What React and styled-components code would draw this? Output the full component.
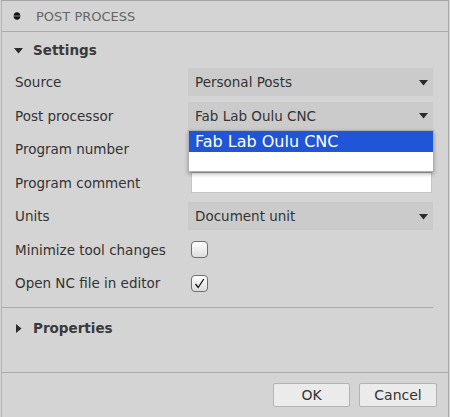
import React from 'react'
import styled, { createGlobalStyle } from 'styled-components'

const GlobalStyle = createGlobalStyle`
    html, body {
        margin: 0;
        padding: 0;
        background: #d4d4d4;
    }
    * {
        box-sizing: border-box;
    }
`

const Window = styled.div`
    width: 448px;
    height: 417px;
    margin-left: 1px;
    display: flex;
    flex-direction: column;
    background: #d4d4d4;
    border-top: 1px solid #a4a4a4;
    border-left: 1px solid #b4b4b4;
    border-right: 1px solid #a8a8a8;
    font-family: "DejaVu Sans", sans-serif;
    font-size: 13.5px;
    color: #333;
    position: relative;
`

const TitleBar = styled.div`
    height: 31px;
    flex-shrink: 0;
    display: flex;
    align-items: center;
    gap: 15px;
    padding-left: 11px;
    border-bottom: 1px solid #ababab;
    color: #666;
    font-size: 13px;
`

const Section = styled.div`
    margin-right: 15px;
    border-bottom: ${p => (p.divided ? '1px solid #ababab' : 'none')};
    padding-bottom: ${p => p.bottom || 0}px;
`

const SectionHead = styled.div`
    height: ${p => p.h}px;
    display: flex;
    align-items: center;
    gap: 10px;
    padding-left: 12px;
    font-weight: bold;
    font-size: 13.5px;
    color: #3a3a3a;
`

const Grid = styled.div`
    display: grid;
    grid-template-columns: 173px 245px;
    grid-auto-rows: 28px;
    row-gap: 5.5px;
    padding-left: 13px;
`

const Label = styled.div`
    display: flex;
    align-items: center;
    white-space: nowrap;
`

const Cell = styled.div`
    display: flex;
    align-items: center;
    position: relative;
`

const Select = styled.div`
    width: 100%;
    height: 100%;
    background: #cbcbcb;
    display: flex;
    align-items: center;
    justify-content: space-between;
    padding: 0 5px 0 7px;
`

const TextInput = styled.div`
    margin-left: 3px;
    width: 241px;
    height: 21px;
    background: #fff;
    border: 1px solid #c4c4c4;
    border-top-color: #a8a8a8;
`

const Check = styled.div`
    margin-left: 3px;
    width: 17px;
    height: 17px;
    border: 1px solid #6f6f6f;
    border-radius: 4px;
    background: linear-gradient(#ffffff, #dcdcdc);
    display: flex;
    align-items: center;
    justify-content: center;
`

const Popup = styled.div`
    position: absolute;
    left: 0;
    top: 28px;
    width: 246px;
    background: #fff;
    border: 1px solid #b0b0b0;
    box-shadow: 0 2px 4px rgba(0, 0, 0, 0.3);
    z-index: 5;
`

const Option = styled.div`
    height: ${p => p.h}px;
    padding-left: 6px;
    display: flex;
    align-items: center;
    font-size: 16px;
    background: ${p => (p.active ? '#1f55d6' : '#fff')};
    color: ${p => (p.active ? '#fff' : '#000')};
`

const Spacer = styled.div`
    flex: 1;
`

const Footer = styled.div`
    height: 45px;
    flex-shrink: 0;
    border-top: 1px solid #ababab;
    display: flex;
    align-items: center;
    justify-content: flex-end;
    gap: 9px;
    padding-right: 11px;
`

const Button = styled.button`
    width: ${p => p.w}px;
    height: 24px;
    background: #ebebeb;
    border: 1px solid #b3b3b3;
    border-radius: 2px;
    font-family: "DejaVu Sans", sans-serif;
    font-size: 14px;
    color: #333;
    padding: 0;
`

const Arrow = ({ dir = 'down' }) => (
    <svg width="9" height="9" viewBox="0 0 9 9">
        {dir === 'down'
            ? <path d="M0 2 H9 L4.5 7.5 Z" fill="#2b2b2b" />
            : <path d="M2 0 V9 L7.5 4.5 Z" fill="#2b2b2b" />}
    </svg>
)

const PanelIcon = () => (
    <svg width="8" height="8" viewBox="0 0 8 8">
        <ellipse cx="4" cy="4" rx="3.3" ry="3.8" fill="#111" />
        <rect x="0.6" y="3.5" width="6.8" height="1" fill="#888" />
    </svg>
)

const SelectBox = ({ value }) => (
    <Select>
        <span>{value}</span>
        <Arrow />
    </Select>
)

export default function App() {
    return (
        <>
            <GlobalStyle />
            <Window>
                <TitleBar><PanelIcon />POST PROCESS</TitleBar>
                <Section divided bottom={10}>
                    <SectionHead h={36}><Arrow />Settings</SectionHead>
                    <Grid>
                        <Label>Source</Label>
                        <Cell><SelectBox value="Personal Posts" /></Cell>
                        <Label>Post processor</Label>
                        <Cell>
                            <SelectBox value="Fab Lab Oulu CNC" />
                            <Popup>
                                <Option active h={21}>Fab Lab Oulu CNC</Option>
                                <Option h={19} />
                            </Popup>
                        </Cell>
                        <Label>Program number</Label>
                        <Cell><TextInput /></Cell>
                        <Label>Program comment</Label>
                        <Cell><TextInput /></Cell>
                        <Label>Units</Label>
                        <Cell><SelectBox value="Document unit" /></Cell>
                        <Label>Minimize tool changes</Label>
                        <Cell><Check /></Cell>
                        <Label>Open NC file in editor</Label>
                        <Cell>
                            <Check>
                                <svg width="11" height="11" viewBox="0 0 11 11">
                                    <path d="M1.5 6 L4.2 9.5 L9.8 1" fill="none" stroke="#111" strokeWidth="1.3" />
                                </svg>
                            </Check>
                        </Cell>
                    </Grid>
                </Section>
                <Section>
                    <SectionHead h={40}><Arrow dir="right" />Properties</SectionHead>
                </Section>
                <Spacer />
                <Footer>
                    <Button w={77}>OK</Button>
                    <Button w={78}>Cancel</Button>
                </Footer>
            </Window>
        </>
    )
}
